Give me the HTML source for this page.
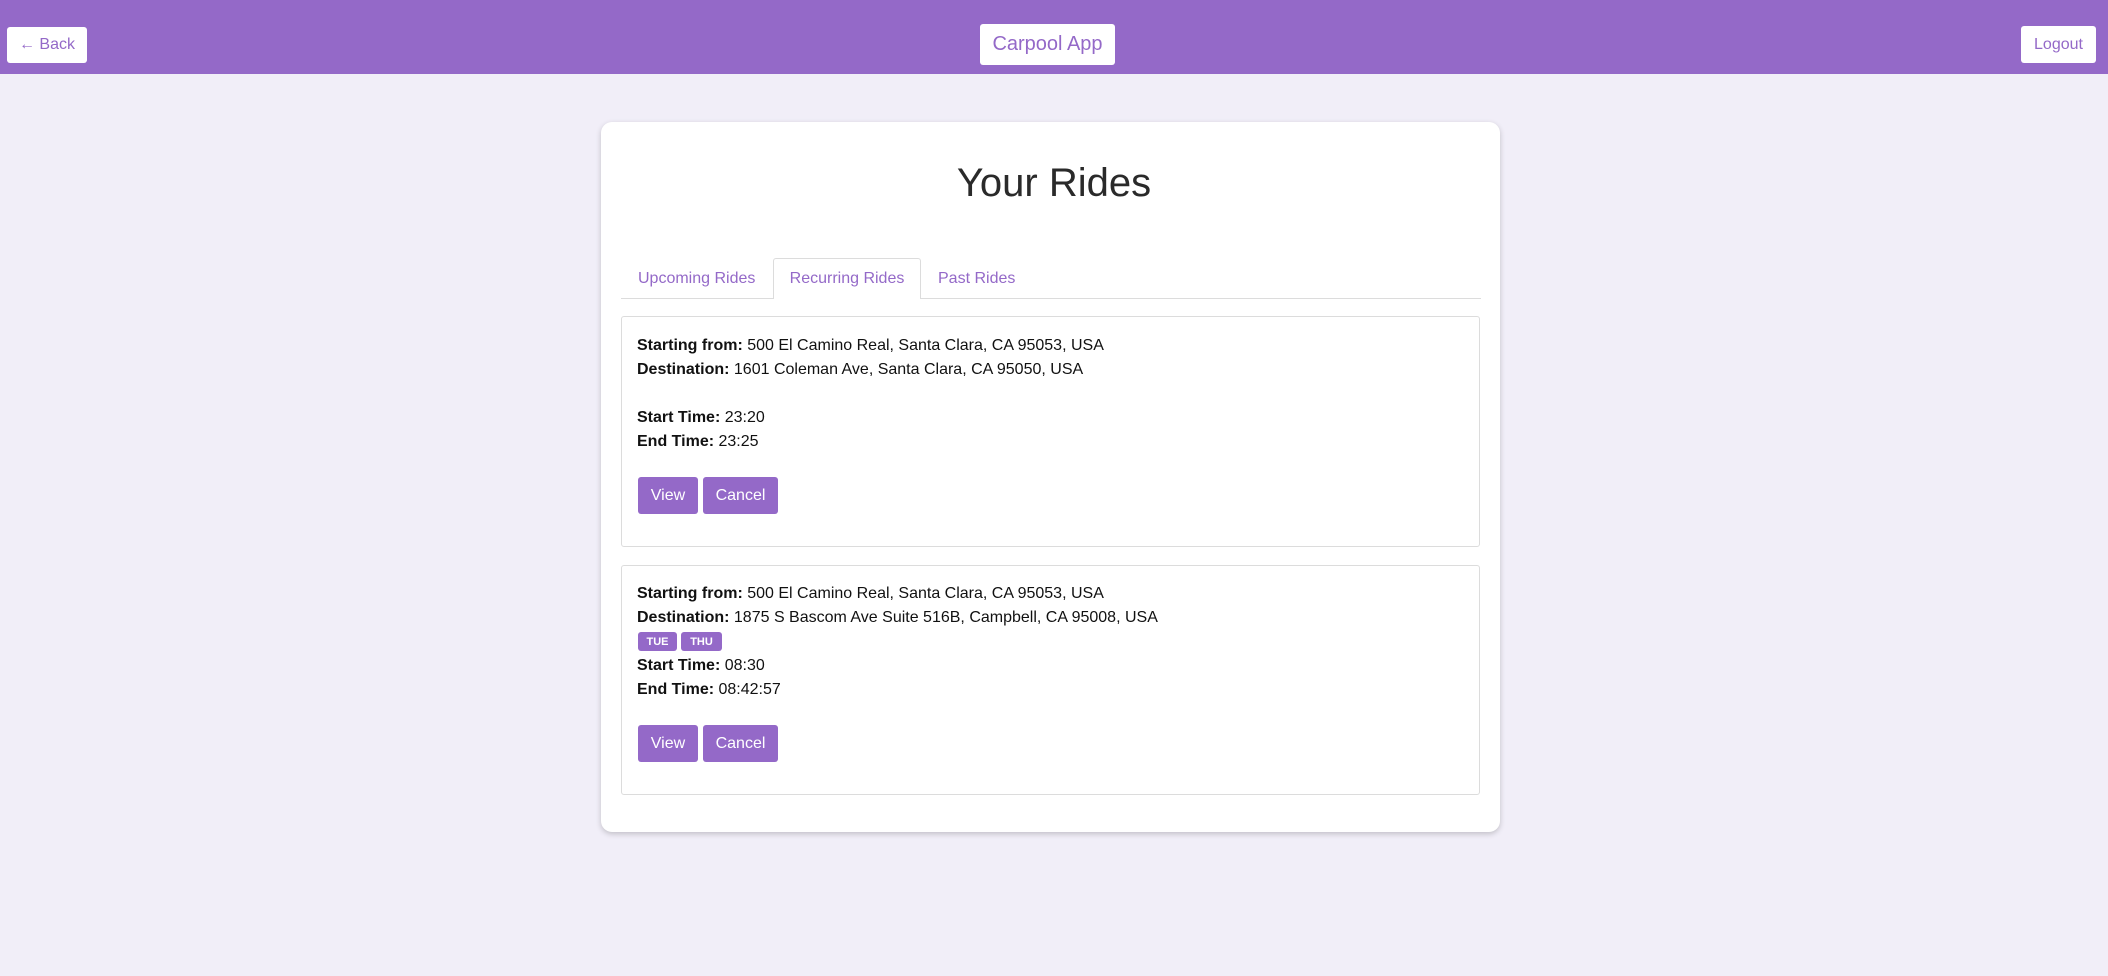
<!DOCTYPE html>
<html><head><style>
*{box-sizing:border-box;margin:0;padding:0}
body{width:2108px;height:976px;background:#f1eef8;font-family:"Liberation Sans",Arial,sans-serif;position:relative;overflow:hidden;color:#212121}
.hdr{position:absolute;left:0;top:0;width:2108px;height:74px;background:#9469c8}
.hb{position:absolute;background:#fff;color:#9469c8;border-radius:3px;display:flex;align-items:center;justify-content:center}
.card{position:absolute;left:601px;top:122px;width:899px;height:710px;background:#fff;border-radius:11px;box-shadow:0 2px 6px rgba(0,0,0,.2)}
h1{position:absolute;left:0;width:100%;top:161px;text-align:center;font-weight:normal;font-size:40px;color:#2a2a2a}
.tab{position:absolute;top:259px;height:40px;font-size:16px;color:#9469c8;display:flex;align-items:center}
.ride{position:absolute;left:621px;width:859px;border:1px solid #dcdcdc;border-radius:3px;background:#fff}
.ln{position:absolute;left:637px;font-size:16px;line-height:24px;color:#111;white-space:nowrap}
.btn{position:absolute;background:#9469c8;color:#fff;border-radius:3px;font-size:16px;display:flex;align-items:center;justify-content:center}
.bd{position:absolute;top:632px;height:19px;background:#9469c8;color:#fff;border-radius:3px;font-size:11px;font-weight:bold;display:flex;align-items:center;justify-content:center}
</style></head><body>
<div class="hdr"></div>
<div class="hb" style="left:7px;top:27px;width:80px;height:36px;font-size:16px">← Back</div>
<div class="hb" style="left:980px;top:24px;width:135px;height:41px;font-size:20px">Carpool App</div>
<div class="hb" style="left:2021px;top:26px;width:75px;height:37px;font-size:16px">Logout</div>
<div class="card"></div>
<h1>Your Rides</h1>
<div style="position:absolute;left:621px;top:298px;width:860px;height:1px;background:#dcdcdc"></div>
<div style="position:absolute;left:773px;top:258px;width:148px;height:41px;background:#fff;border:1px solid #dcdcdc;border-bottom:none;border-radius:3px 3px 0 0"></div>
<div class="tab" style="left:638px">Upcoming Rides</div>
<div class="tab" style="left:773px;width:148px;justify-content:center">Recurring Rides</div>
<div class="tab" style="left:938px">Past Rides</div>

<div class="ride" style="top:316px;height:231px"></div>
<div class="ln" style="top:334px"><b>Starting from:</b> 500 El Camino Real, Santa Clara, CA 95053, USA</div>
<div class="ln" style="top:358px"><b>Destination:</b> 1601 Coleman Ave, Santa Clara, CA 95050, USA</div>
<div class="ln" style="top:406px"><b>Start Time:</b> 23:20</div>
<div class="ln" style="top:430px"><b>End Time:</b> 23:25</div>
<div class="btn" style="left:638px;top:477px;width:60px;height:37px">View</div>
<div class="btn" style="left:703px;top:477px;width:75px;height:37px">Cancel</div>

<div class="ride" style="top:565px;height:230px"></div>
<div class="ln" style="top:582px"><b>Starting from:</b> 500 El Camino Real, Santa Clara, CA 95053, USA</div>
<div class="ln" style="top:606px"><b>Destination:</b> 1875 S Bascom Ave Suite 516B, Campbell, CA 95008, USA</div>
<div class="bd" style="left:638px;width:39px">TUE</div>
<div class="bd" style="left:681px;width:41px">THU</div>
<div class="ln" style="top:654px"><b>Start Time:</b> 08:30</div>
<div class="ln" style="top:678px"><b>End Time:</b> 08:42:57</div>
<div class="btn" style="left:638px;top:725px;width:60px;height:37px">View</div>
<div class="btn" style="left:703px;top:725px;width:75px;height:37px">Cancel</div>
</body></html>
